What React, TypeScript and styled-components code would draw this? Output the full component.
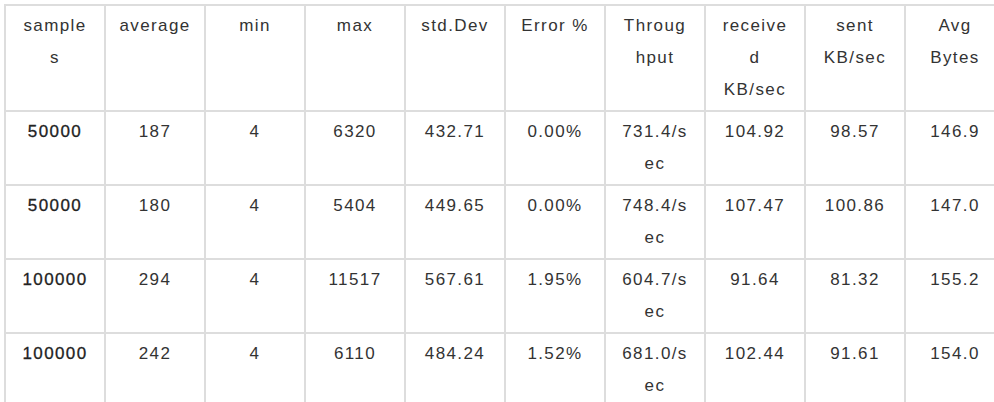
import styled, { createGlobalStyle } from "styled-components";

const GlobalStyle = createGlobalStyle`
  html, body {
    margin: 0;
    padding: 0;
    background: #ffffff;
    overflow: hidden;
  }
`;

const Page = styled.div`
  padding: 4px 0 0 4px;
  font-family: "Liberation Sans", Arial, sans-serif;
  color: #333333;
`;

const Table = styled.table`
  border-collapse: collapse;
  table-layout: fixed;
  width: 996px;
  font-size: 17px;
  line-height: 32px;
  letter-spacing: 1.4px;
`;

const HeadCell = styled.th`
  border: 2px solid #dddddd;
  padding: 4px 13px;
  font-weight: normal;
  text-align: center;
  vertical-align: top;
  overflow-wrap: anywhere;
`;

const Cell = styled.td<{ $strong?: boolean }>`
  border: 2px solid #dddddd;
  padding: 4px 13px;
  text-align: center;
  vertical-align: top;
  overflow-wrap: anywhere;
  font-weight: normal;
  color: ${({ $strong }) => ($strong ? "#222222" : "#333333")};
  -webkit-text-stroke: ${({ $strong }) => ($strong ? "0.3px #222222" : "0")};
`;

const headers = [
  "samples",
  "average",
  "min",
  "max",
  "std.Dev",
  "Error %",
  "Throughput",
  "received KB/sec",
  "sent KB/sec",
  "Avg Bytes",
];

const rows = [
  ["50000", "187", "4", "6320", "432.71", "0.00%", "731.4/sec", "104.92", "98.57", "146.9"],
  ["50000", "180", "4", "5404", "449.65", "0.00%", "748.4/sec", "107.47", "100.86", "147.0"],
  ["100000", "294", "4", "11517", "567.61", "1.95%", "604.7/sec", "91.64", "81.32", "155.2"],
  ["100000", "242", "4", "6110", "484.24", "1.52%", "681.0/sec", "102.44", "91.61", "154.0"],
];

export default function App() {
  return (
    <Page>
      <GlobalStyle />
      <Table>
        <colgroup>
          {headers.map((h) => (
            <col key={h} style={{ width: 100 }} />
          ))}
        </colgroup>
        <thead>
          <tr>
            {headers.map((h) => (
              <HeadCell key={h}>{h}</HeadCell>
            ))}
          </tr>
        </thead>
        <tbody>
          {rows.map((row, i) => (
            <tr key={i}>
              {row.map((v, j) => (
                <Cell key={j} $strong={j === 0}>
                  {v}
                </Cell>
              ))}
            </tr>
          ))}
        </tbody>
      </Table>
    </Page>
  );
}
